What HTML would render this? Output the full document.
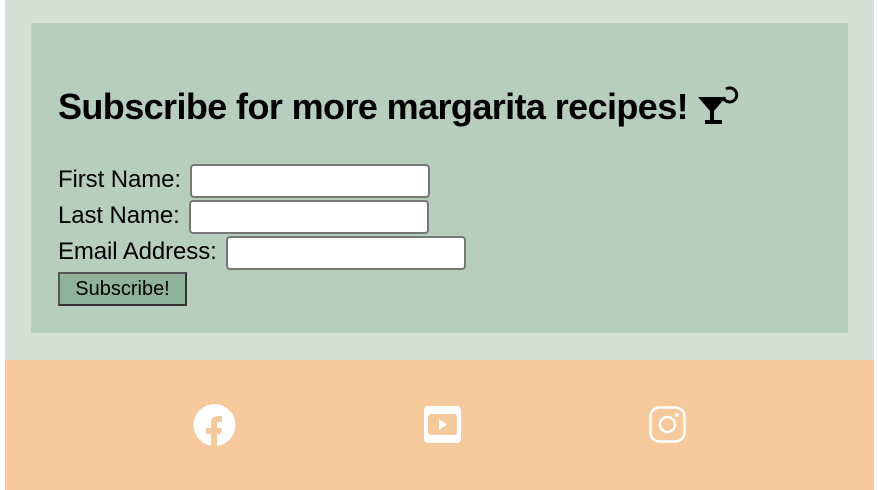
<!DOCTYPE html>
<html><head><style>
*{margin:0;padding:0;box-sizing:border-box}
body{width:878px;height:490px;background:#fff;position:relative;overflow:hidden;font-family:"Liberation Sans",sans-serif}
.top{position:absolute;left:5px;top:0;width:869px;height:360px;background:#d3e0d6}
.box{position:absolute;left:31px;top:23px;width:817px;height:310px;background:#b7cdbd}
h1{position:absolute;left:58px;top:85px;font-size:36px;font-weight:bold;color:#000;letter-spacing:-0.6px;white-space:nowrap;line-height:44px}
.lbl{position:absolute;left:58px;font-size:24px;color:#000;letter-spacing:-0.1px;line-height:26px}
.in{position:absolute;height:34px;width:240px;background:#fff;border:2px solid #777;border-radius:4px}
.btn{position:absolute;left:58px;top:272px;width:129px;height:34px;background:#8fb39a;border:2px solid #333;border-top-color:#555;border-left-color:#555;font-size:20px;text-align:center;line-height:30px;color:#000}
.foot{position:absolute;left:5px;top:360px;width:869px;height:130px;background:#f6c99d}
svg{position:absolute}
</style></head><body>
<div class="top"></div>
<div class="box"></div>
<h1>Subscribe for more margarita recipes!</h1>
<svg style="left:697px;top:84px" width="46" height="46" viewBox="0 0 46 46">
<path d="M1 13 H29 L17 27 V36 H25 V40 H8 V36 H13 V27 Z" fill="#000"/>
<path d="M26 13 A7 7 0 1 0 29 5" fill="none" stroke="#000" stroke-width="3"/>
</svg>
<div class="lbl" style="top:167px">First Name:</div>
<div class="in" style="left:190px;top:164px"></div>
<div class="lbl" style="top:203px">Last Name:</div>
<div class="in" style="left:189px;top:200px"></div>
<div class="lbl" style="top:239px">Email Address:</div>
<div class="in" style="left:226px;top:236px"></div>
<div class="btn">Subscribe!</div>
<div class="foot"></div>
<svg style="left:193px;top:404px" width="43" height="43" viewBox="0 0 43 43">
<circle cx="21.5" cy="21" r="21" fill="#fff"/>
<path d="M18 43 V30 H13 V24 H18 V19 Q18 12 25 12 H29 V18 H26 Q24 18 24 20 V24 H29 L28 30 H24 V43 Z" fill="#f6c99d"/>
</svg>
<svg style="left:424px;top:406px" width="37" height="37" viewBox="0 0 37 37">
<rect x="0" y="0" width="37" height="37" rx="4" fill="#fff"/>
<rect x="4" y="8" width="29" height="21" rx="3" fill="#f6c99d"/>
<path d="M15 13 L23 18.5 L15 24 Z" fill="#fff"/>
</svg>
<svg style="left:649px;top:406px" width="37" height="37" viewBox="0 0 37 37">
<rect x="1.5" y="1.5" width="34" height="34" rx="9" fill="none" stroke="#fff" stroke-width="2.5"/>
<circle cx="18.5" cy="18.5" r="7.5" fill="none" stroke="#fff" stroke-width="2.5"/>
<circle cx="28" cy="9" r="2" fill="#fff"/>
</svg>
</body></html>
